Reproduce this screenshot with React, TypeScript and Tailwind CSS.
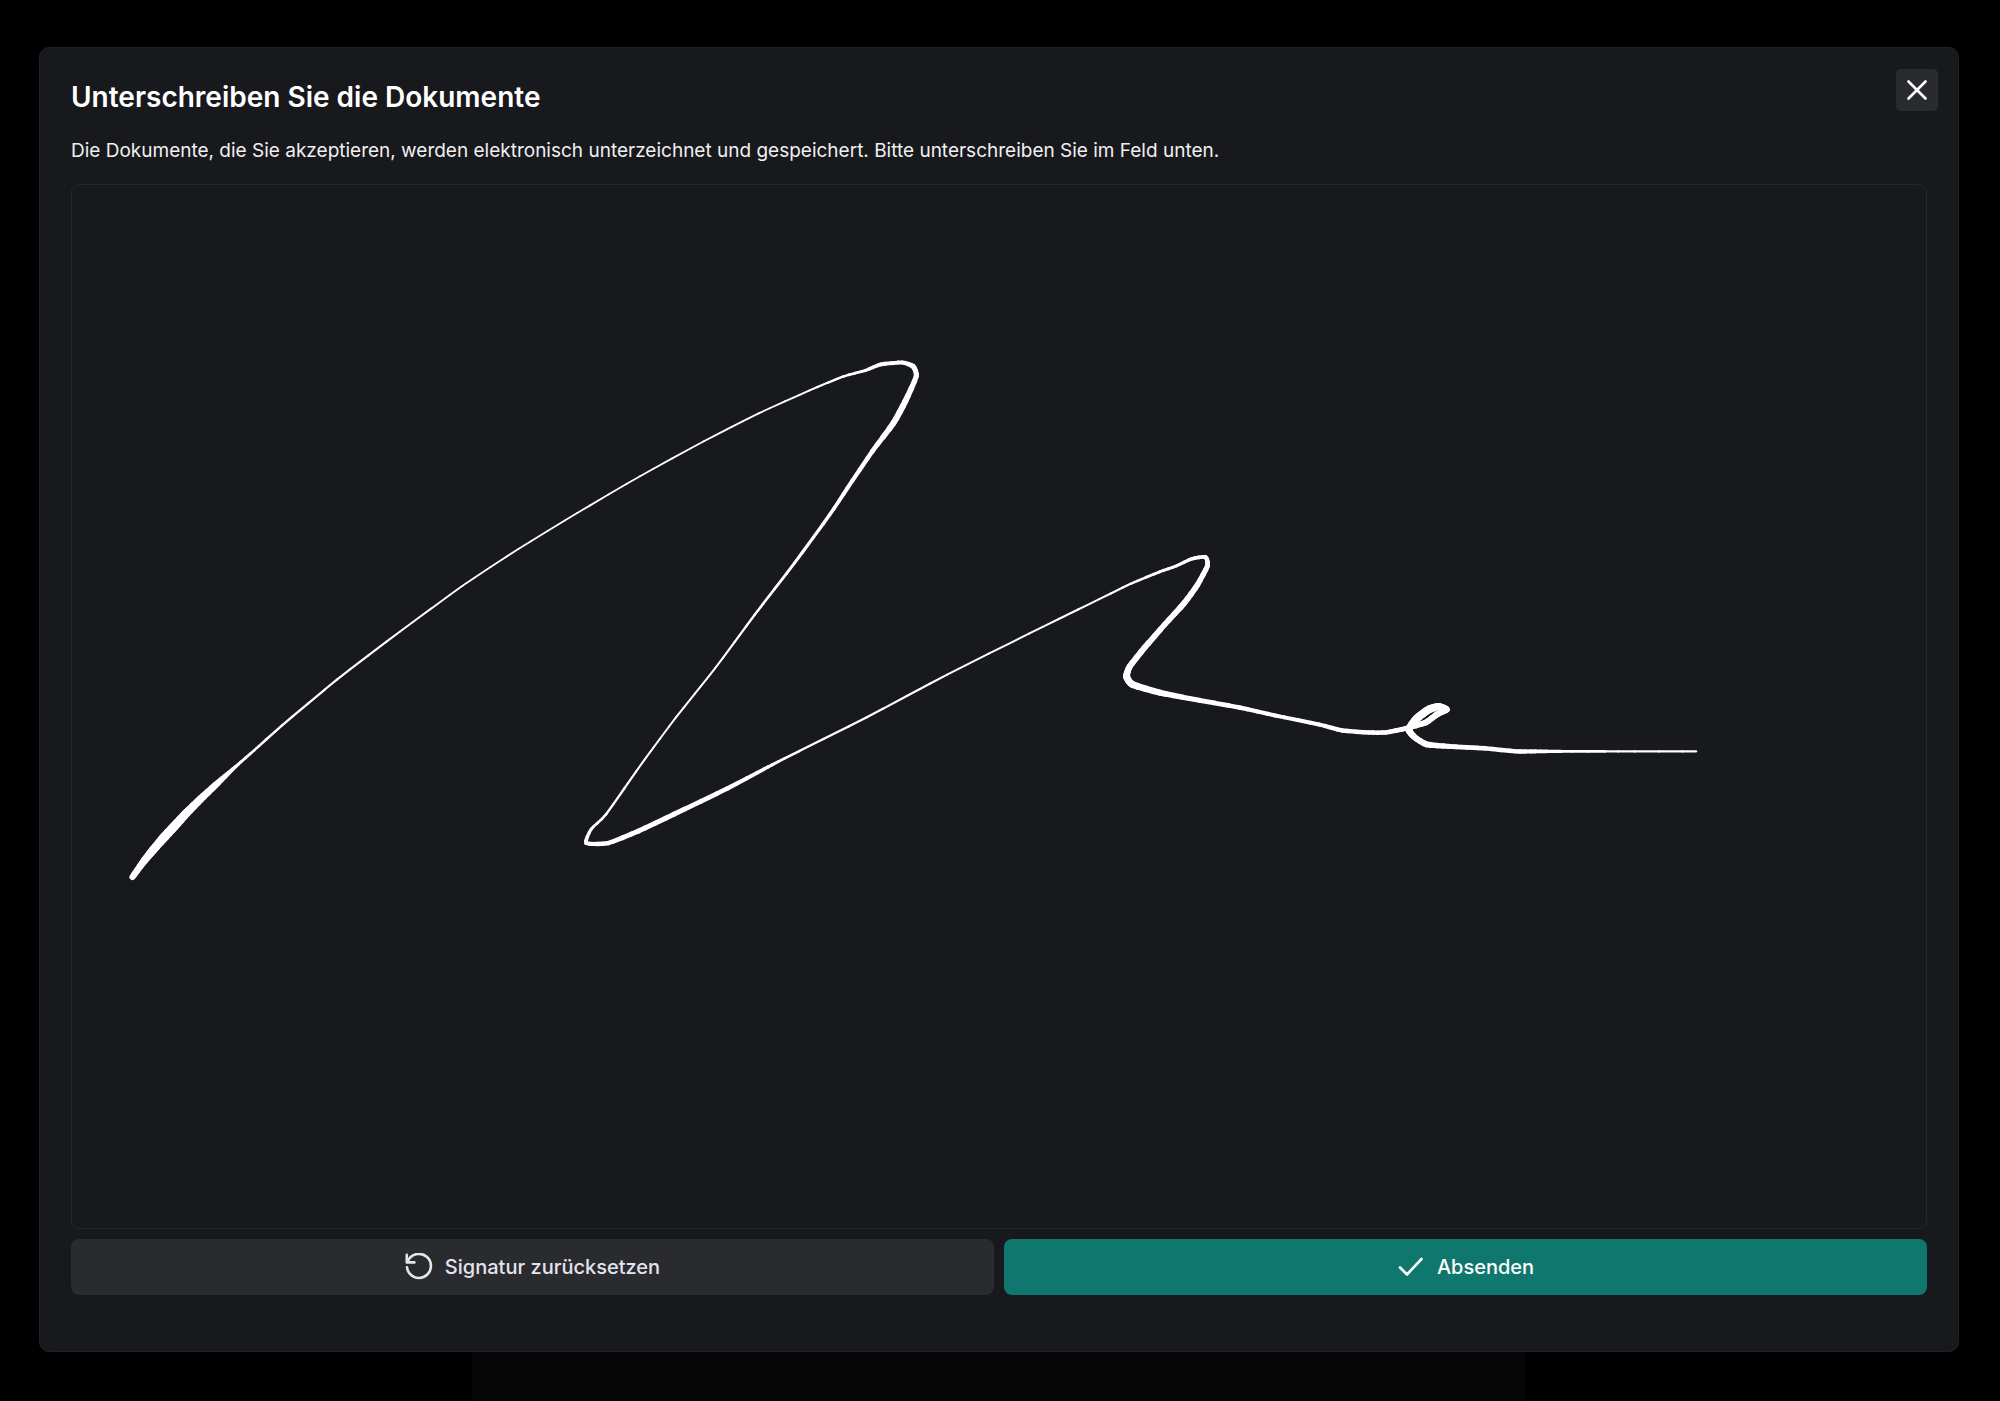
import { Fragment } from "react";

// x, y and pen width of every sampled point of the stroke
const stroke = [
  [130, 878, 6], [140, 864, 7], [148, 854, 8], [160, 840, 9], [172, 827, 9],
  [184, 814, 8.5], [198, 800, 7.5], [213, 786, 6.5], [225, 775, 4.5], [236, 765, 3],
  [252, 751, 2.6], [280, 726, 2.4], [335, 680, 2.2], [398, 632, 2], [461, 586, 1.8],
  [517, 549, 1.8], [576, 513, 1.8], [639, 476, 1.8], [703, 441, 1.8], [758, 413, 1.8],
  [809, 390, 2], [843, 376, 2.5], [865, 370, 3], [880, 364, 4],
  [902, 362, 4], [913, 366, 5], [916, 376, 5], [905, 401, 6], [893, 423, 6],
  [872, 451, 4.5], [847, 488, 4], [829, 515, 3.5], [794, 563, 3], [754, 615, 2.4],
  [714, 669, 2], [675, 718, 2], [643, 761, 2], [605, 815, 2.5], [590, 830, 3],
  [585, 844, 4], [607, 844, 4.5], [637, 832, 5], [673, 815, 5], [727, 789, 4.5],
  [763, 770, 3.5], [784, 759, 2.6], [866, 718, 2.2], [947, 675, 2], [1029, 634, 2],
  [1090, 604, 2], [1131, 584, 2.3], [1160, 572, 3], [1177, 566, 3], [1192, 559, 3.5],
  [1206, 557, 4], [1208, 566, 5], [1198, 585, 5.5], [1185, 603, 6], [1165, 625, 5.5],
  [1145, 648, 6], [1130, 667, 6], [1127, 677, 7], [1133, 685, 7], [1160, 693, 6],
  [1190, 699, 5], [1240, 708, 4.5], [1276, 716, 4], [1320, 725, 4], [1343, 731, 4.5],
  [1370, 733, 4.5], [1387, 733, 4.5], [1407, 729, 5], [1427, 723, 6], [1438, 715, 6],
  [1448, 710, 6], [1440, 707, 7], [1430, 710, 8], [1418, 719, 8], [1410, 730, 7],
  [1416, 738, 6], [1428, 745, 6], [1450, 747, 5], [1487, 749, 4.5], [1517, 752, 4.5],
  [1537, 752, 4], [1563, 752, 3], [1620, 752, 2.4], [1698, 752, 2.4],
];

const STEPS = 4;
const TENSION = 0.28;

function spline(a: number, b: number, c: number, d: number, t: number) {
  const m0 = TENSION * (c - a);
  const m1 = TENSION * (d - b);
  return (
    b + t * m0 + t * t * (3 * (c - b) - 2 * m0 - m1) + t * t * t * (2 * (b - c) + m0 + m1)
  );
}

function Signature() {
  return (
    <svg
      viewBox="71 184 1856 1046"
      className="absolute inset-0 size-full"
      role="img"
      aria-label="Signatur"
      stroke="#fff"
      strokeLinecap="round"
    >
      {stroke.slice(0, -1).map((p, i) => {
        const next = stroke[i + 1];
        const before = stroke[i - 1] ?? p;
        const after = stroke[i + 2] ?? next;
        const at = (t: number) => [
          spline(before[0], p[0], next[0], after[0], t),
          spline(before[1], p[1], next[1], after[1], t),
        ];
        return (
          <Fragment key={i}>
            {Array.from({ length: STEPS }, (_, s) => {
              const [x1, y1] = at(s / STEPS);
              const [x2, y2] = at((s + 1) / STEPS);
              const width = p[2] + ((next[2] - p[2]) * (s + 0.5)) / STEPS;
              return (
                <line key={s} x1={x1} y1={y1} x2={x2} y2={y2} strokeWidth={width} />
              );
            })}
          </Fragment>
        );
      })}
    </svg>
  );
}

function ResetIcon() {
  return (
    <svg
      viewBox="0 0 28 28"
      className="size-7"
      fill="none"
      stroke="currentColor"
      strokeWidth="2.6"
      strokeLinecap="round"
      strokeLinejoin="round"
      aria-hidden="true"
    >
      <path d="M1.8 1.8v7.6h7.6" />
      <path d="M2.6 8.9A12 12 0 1 1 2 14.4" />
    </svg>
  );
}

export default function App() {
  return (
    <div className="flex min-h-screen flex-col bg-black pt-[47px] pr-[41px] pl-[39px] font-['Inter',sans-serif] text-white">
      <section
        role="dialog"
        aria-labelledby="dialog-title"
        className="flex flex-1 flex-col rounded-[10px] border border-[#1f2124] bg-[#18191c] pb-14"
      >
        <header className="flex items-start justify-between pr-5 pl-[31px]">
          <div className="pt-[33px]">
            <h2 id="dialog-title" className="text-[28px] leading-8 font-semibold">
              Unterschreiben Sie die Dokumente
            </h2>
            <p className="mt-[26px] text-[19px] leading-6 text-[#f0f0f2]">
              Die Dokumente, die Sie akzeptieren, werden elektronisch unterzeichnet
              und gespeichert. Bitte unterschreiben Sie im Feld unten.
            </p>
          </div>
          <button
            type="button"
            aria-label="Schließen"
            className="mt-[21px] flex size-[42px] items-center justify-center rounded-[5px] bg-[#2a2b2f]"
          >
            <svg
              viewBox="0 0 20 20"
              className="size-5"
              stroke="currentColor"
              strokeWidth="2.6"
              strokeLinecap="round"
              aria-hidden="true"
            >
              <path d="M1.5 1.5l17 17M18.5 1.5l-17 17" />
            </svg>
          </button>
        </header>
        <div className="mt-[21px] flex flex-1 flex-col gap-[10px] px-[31px]">
          <div className="relative flex-1 rounded-lg border border-[#26272b]">
            <Signature />
          </div>
          <div className="grid grid-cols-2 gap-[10px] text-[20px] font-medium">
            <button
              type="button"
              className="flex h-14 items-center justify-center gap-3 rounded-lg bg-[#2a2b2f] text-[#e4e4ee]"
            >
              <ResetIcon />
              Signatur zurücksetzen
            </button>
            <button
              type="button"
              className="flex h-14 items-center justify-center gap-3 rounded-lg bg-[#10776e]"
            >
              <svg
                viewBox="0 0 28 28"
                className="size-7"
                fill="none"
                stroke="currentColor"
                strokeWidth="2.6"
                strokeLinecap="round"
                strokeLinejoin="round"
                aria-hidden="true"
              >
                <path d="M3 14.5l7 7L24.5 6" />
              </svg>
              Absenden
            </button>
          </div>
        </div>
      </section>
      <div className="mx-auto h-[49px] w-full max-w-[1054px] bg-[#060606]" />
    </div>
  );
}
